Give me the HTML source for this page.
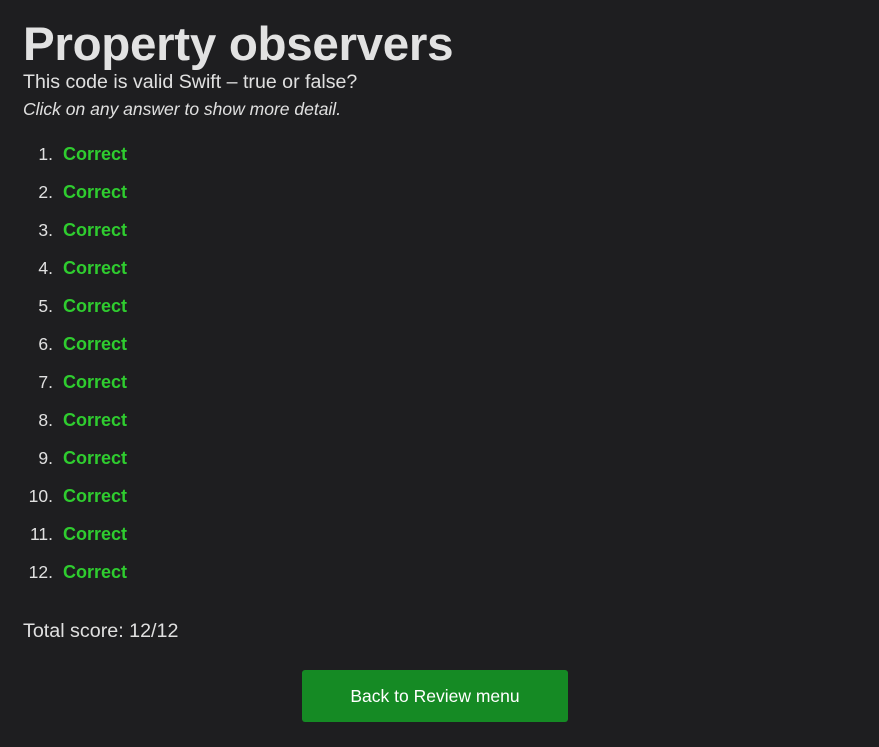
<!DOCTYPE html>
<html><head><style>
body{margin:0;background:#1e1e20;color:#e0e0e0;font-family:"Liberation Sans",sans-serif;width:879px;height:747px;overflow:hidden;position:relative}
h1{position:absolute;left:23px;top:14px;margin:0;font-size:47.5px;font-weight:bold;color:#e2e2e2;letter-spacing:-0.3px;line-height:62px}
.sub{position:absolute;left:23px;top:71px;font-size:19.6px;line-height:22px}
.it{position:absolute;left:23px;top:99px;font-size:17.5px;font-style:italic;line-height:20px}
.row{position:absolute;left:0;font-size:17.5px;line-height:20px}
.n{position:absolute;left:13px;width:40px;text-align:right}
.c{position:absolute;left:63px;color:#2fcc2f;font-weight:bold;white-space:nowrap;font-size:18px}
.tot{position:absolute;left:23px;top:620px;font-size:19.7px;line-height:22px}
.btn{position:absolute;left:302px;top:670px;width:266px;height:52px;background:#158a24;border-radius:3px;color:#fff;font-size:17.5px;text-align:center;line-height:52px}
</style></head><body>
<h1>Property observers</h1>
<div class="sub">This code is valid Swift – true or false?</div>
<div class="it">Click on any answer to show more detail.</div>
<div class="row" style="top:144px"><span class="n">1.</span><span class="c">Correct</span></div>
<div class="row" style="top:182px"><span class="n">2.</span><span class="c">Correct</span></div>
<div class="row" style="top:220px"><span class="n">3.</span><span class="c">Correct</span></div>
<div class="row" style="top:258px"><span class="n">4.</span><span class="c">Correct</span></div>
<div class="row" style="top:296px"><span class="n">5.</span><span class="c">Correct</span></div>
<div class="row" style="top:334px"><span class="n">6.</span><span class="c">Correct</span></div>
<div class="row" style="top:372px"><span class="n">7.</span><span class="c">Correct</span></div>
<div class="row" style="top:410px"><span class="n">8.</span><span class="c">Correct</span></div>
<div class="row" style="top:448px"><span class="n">9.</span><span class="c">Correct</span></div>
<div class="row" style="top:486px"><span class="n">10.</span><span class="c">Correct</span></div>
<div class="row" style="top:524px"><span class="n">11.</span><span class="c">Correct</span></div>
<div class="row" style="top:562px"><span class="n">12.</span><span class="c">Correct</span></div>
<div class="tot">Total score: 12/12</div>
<div class="btn">Back to Review menu</div>
</body></html>
